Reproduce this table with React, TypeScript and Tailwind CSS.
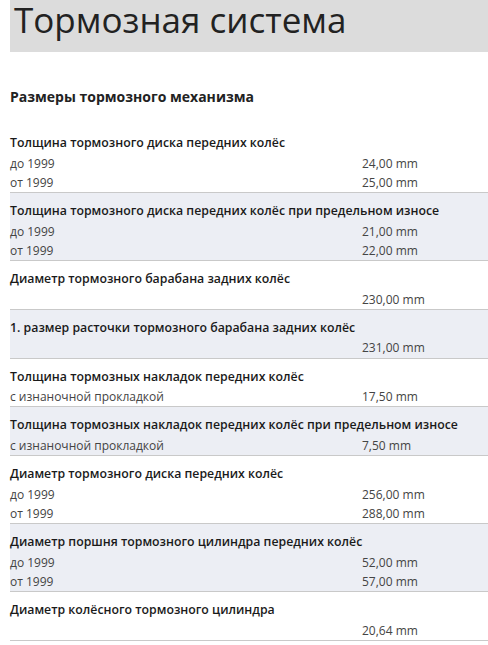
import React from 'react';

interface SpecRow {
  label: string;
  value: string;
}

interface SpecGroup {
  title: string;
  rows: SpecRow[];
}

const groups: SpecGroup[] = [
  {
    title: 'Толщина тормозного диска передних колёс',
    rows: [
      { label: 'до 1999', value: '24,00 mm' },
      { label: 'от 1999', value: '25,00 mm' },
    ],
  },
  {
    title: 'Толщина тормозного диска передних колёс при предельном износе',
    rows: [
      { label: 'до 1999', value: '21,00 mm' },
      { label: 'от 1999', value: '22,00 mm' },
    ],
  },
  {
    title: 'Диаметр тормозного барабана задних колёс',
    rows: [{ label: '', value: '230,00 mm' }],
  },
  {
    title: '1. размер расточки тормозного барабана задних колёс',
    rows: [{ label: '', value: '231,00 mm' }],
  },
  {
    title: 'Толщина тормозных накладок передних колёс',
    rows: [{ label: 'с изнаночной прокладкой', value: '17,50 mm' }],
  },
  {
    title: 'Толщина тормозных накладок передних колёс при предельном износе',
    rows: [{ label: 'с изнаночной прокладкой', value: '7,50 mm' }],
  },
  {
    title: 'Диаметр тормозного диска передних колёс',
    rows: [
      { label: 'до 1999', value: '256,00 mm' },
      { label: 'от 1999', value: '288,00 mm' },
    ],
  },
  {
    title: 'Диаметр поршня тормозного цилиндра передних колёс',
    rows: [
      { label: 'до 1999', value: '52,00 mm' },
      { label: 'от 1999', value: '57,00 mm' },
    ],
  },
  {
    title: 'Диаметр колёсного тормозного цилиндра',
    rows: [{ label: '', value: '20,64 mm' }],
  },
];

export default function App() {
  return (
    <div className="min-h-screen bg-white pl-[10px] text-[#333] font-['Open_Sans',sans-serif]">
      <div className="h-[52px] bg-[#dcdcdc] pl-[4px]">
        <h1 className="text-[35px] font-normal leading-[39px] text-[#222]">Тормозная система</h1>
      </div>

      <h2 className="mt-[35px] text-[14px] font-bold leading-[20px] text-[#222]">
        Размеры тормозного механизма
      </h2>

      <div className="mt-[18px]">
        {groups.map((group, i) => (
          <div
            key={i}
            className={`border-b border-[#c9c9c9] pt-[8px] ${i % 2 === 1 ? 'bg-[#eceef4]' : 'bg-white'}`}
          >
            <div className="text-[12.3px] font-semibold leading-[20.5px] text-[#1a1a1a]">{group.title}</div>
            {group.rows.map((row, j) => (
              <div key={j} className="flex text-[12px] leading-[19.25px] text-[#444]">
                <div className="w-[352px]">{row.label}</div>
                <div>{row.value}</div>
              </div>
            ))}
          </div>
        ))}
      </div>
    </div>
  );
}
